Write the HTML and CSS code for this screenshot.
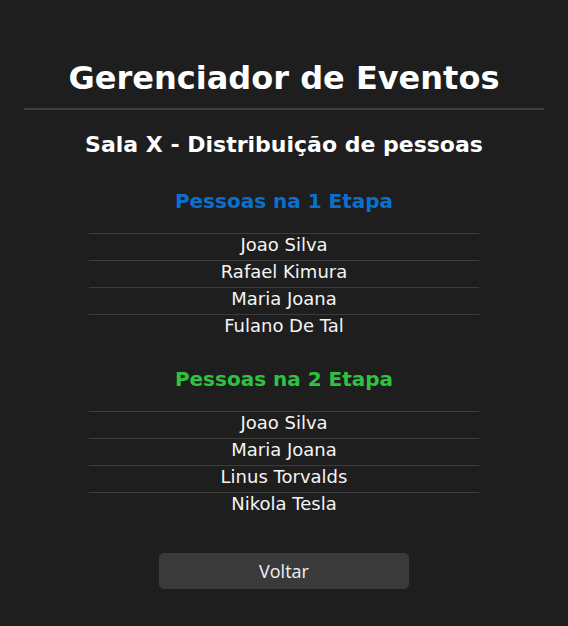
FILE: index.html
```html
<!DOCTYPE html>
<html lang="pt">
<head>
<meta charset="utf-8">
<title>Gerenciador de Eventos</title>
<link rel="stylesheet" href="styles.css">
</head>
<body>
<div class="page">
  <h1 class="title">Gerenciador de Eventos</h1>
  <hr class="divider">
  <h2 class="subtitle">Sala X - Distribuição de pessoas</h2>

  <section class="stage">
    <h3 class="stage-title stage-1">Pessoas na 1 Etapa</h3>
    <ul class="people">
      <li>Joao Silva</li>
      <li>Rafael Kimura</li>
      <li>Maria Joana</li>
      <li>Fulano De Tal</li>
    </ul>
  </section>

  <section class="stage">
    <h3 class="stage-title stage-2">Pessoas na 2 Etapa</h3>
    <ul class="people">
      <li>Joao Silva</li>
      <li>Maria Joana</li>
      <li>Linus Torvalds</li>
      <li>Nikola Tesla</li>
    </ul>
  </section>

  <div class="actions">
    <button class="btn" type="button">Voltar</button>
  </div>
</div>
</body>
</html>
```
FILE: styles.css
```css
html, body {
  margin: 0;
  padding: 0;
  background: #1e1e1e;
}
body {
  color: #ffffff;
  font-family: "DejaVu Sans", sans-serif;
}
.page {
  padding: 60px 24px 0;
  display: flex;
  flex-direction: column;
  align-items: center;
}
.title {
  margin: 0;
  font-size: 32px;
  line-height: 37px;
  font-weight: bold;
  text-align: center;
}
.divider {
  align-self: stretch;
  margin: 11px 0 0;
  border: 0;
  height: 2px;
  background: #3e3e3e;
}
.subtitle {
  margin: 22px 0 5px;
  font-size: 22px;
  line-height: 26px;
  font-weight: bold;
}
.stage {
  width: 390px;
  margin-top: 26px;
  display: flex;
  flex-direction: column;
  align-items: center;
}
.stage-title {
  margin: 0;
  font-size: 20px;
  line-height: 24px;
  font-weight: bold;
}
.stage-1 { color: #0b6fd0; }
.stage-2 { color: #2ec33f; }
.people {
  list-style: none;
  margin: 20px 0 0;
  padding: 0;
  width: 100%;
}
.people li {
  border-top: 1px solid #3c3c3c;
  height: 26px;
  line-height: 22px;
  font-size: 18px;
  text-align: center;
  color: #f4f4f4;
}
.actions {
  margin-top: 34px;
}
.btn {
  width: 250px;
  height: 36px;
  border: 0;
  border-radius: 5px;
  background: #3a3a3a;
  color: #f0f0f0;
  font-family: "Open Sans", sans-serif;
  font-size: 18px;
  line-height: 36px;
  padding: 0;
  cursor: pointer;
}
```
